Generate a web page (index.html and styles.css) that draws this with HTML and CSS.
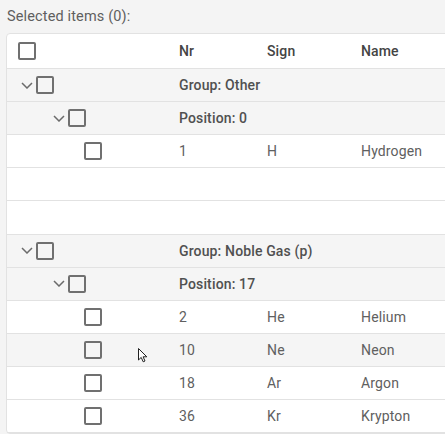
FILE: index.html
```html
<!DOCTYPE html>
<html lang="en">
<head>
<meta charset="utf-8">
<title>Selected items</title>
<link rel="stylesheet" href="styles.css">
</head>
<body>
<div class="page">
  <div class="selected">Selected items (0):</div>
  <div class="grid">
    <div class="row head">
      <div class="lead ind-h"><span class="cb"></span></div>
      <div class="c nr">Nr</div>
      <div class="c sign">Sign</div>
      <div class="c name">Name</div>
    </div>

    <div class="row grp">
      <div class="lead ind-0"><svg class="chev" viewBox="0 0 12 7" width="12" height="7"><polyline points="1,1 6,6 11,1"/></svg><span class="cb"></span></div>
      <div class="c label">Group: Other</div>
    </div>
    <div class="row grp">
      <div class="lead ind-1"><svg class="chev" viewBox="0 0 12 7" width="12" height="7"><polyline points="1,1 6,6 11,1"/></svg><span class="cb"></span></div>
      <div class="c label">Position: 0</div>
    </div>
    <div class="row">
      <div class="lead ind-2"><span class="cb"></span></div>
      <div class="c nr">1</div>
      <div class="c sign">H</div>
      <div class="c name">Hydrogen</div>
    </div>
    <div class="row"></div>
    <div class="row"></div>

    <div class="row grp">
      <div class="lead ind-0"><svg class="chev" viewBox="0 0 12 7" width="12" height="7"><polyline points="1,1 6,6 11,1"/></svg><span class="cb"></span></div>
      <div class="c label">Group: Noble Gas (p)</div>
    </div>
    <div class="row grp">
      <div class="lead ind-1"><svg class="chev" viewBox="0 0 12 7" width="12" height="7"><polyline points="1,1 6,6 11,1"/></svg><span class="cb"></span></div>
      <div class="c label">Position: 17</div>
    </div>
    <div class="row">
      <div class="lead ind-2"><span class="cb"></span></div>
      <div class="c nr">2</div>
      <div class="c sign">He</div>
      <div class="c name">Helium</div>
    </div>
    <div class="row hover">
      <div class="lead ind-2"><span class="cb"></span></div>
      <div class="c nr">10</div>
      <div class="c sign">Ne</div>
      <div class="c name">Neon</div>
      <svg class="cursor" viewBox="0 0 11 15" width="11" height="15"><path d="M0.5 0.5 V12 L3.2 9.4 L5.2 13.8 L7 13 L5.1 8.8 H8.8 Z"/></svg>
    </div>
    <div class="row">
      <div class="lead ind-2"><span class="cb"></span></div>
      <div class="c nr">18</div>
      <div class="c sign">Ar</div>
      <div class="c name">Argon</div>
    </div>
    <div class="row">
      <div class="lead ind-2"><span class="cb"></span></div>
      <div class="c nr">36</div>
      <div class="c sign">Kr</div>
      <div class="c name">Krypton</div>
    </div>
  </div>
</div>
</body>
</html>
```

FILE: styles.css
```css
html, body {
  margin: 0;
  padding: 0;
  background: #f4f4f4;
  overflow: hidden;
}

.page {
  width: 445px;
  height: 434px;
  padding-left: 6px;
  box-sizing: border-box;
  font-family: Roboto, "Liberation Sans", Arial, sans-serif;
  font-size: 14px;
  letter-spacing: 0.01em;
  overflow: hidden;
}

.selected {
  height: 33px;
  display: flex;
  align-items: center;
  padding-left: 1px;
  padding-bottom: 1px;
  box-sizing: border-box;
  color: #5f5f5f;
  font-size: 14.5px;
}

.grid {
  width: 520px;
  background: #ffffff;
  border: 1px solid #e2e2e2;
  border-radius: 4px 0 0 4px;
}

.row {
  position: relative;
  display: flex;
  align-items: center;
  height: 33.12px;
  box-sizing: border-box;
  border-bottom: 1px solid #e2e2e2;
}

.row.head {
  height: 35px;
}

.row.grp,
.row.hover {
  background: #f5f5f5;
}

.lead {
  width: 172px;
  flex: none;
  display: flex;
  align-items: center;
  box-sizing: border-box;
}

.ind-h { padding-left: 11px; }
.ind-0 { padding-left: 14px; }
.ind-1 { padding-left: 46px; }
.ind-2 { padding-left: 77px; }

.chev {
  display: block;
  margin-right: 3px;
  fill: none;
  stroke: #6b6b6b;
  stroke-width: 1.5;
}

.cb {
  display: block;
  width: 18px;
  height: 18px;
  box-sizing: border-box;
  border: 2px solid #707070;
  border-radius: 2px;
}

.c {
  flex: none;
  color: #606060;
  white-space: nowrap;
}

.nr { width: 88px; }
.sign { width: 94px; }
.name { width: 100px; }

.head .c {
  color: #444444;
  font-weight: 500;
}

.label {
  color: #505050;
  font-weight: 500;
}

.cursor {
  position: absolute;
  left: 131px;
  top: 14px;
  fill: #ffffff;
  stroke: #222222;
  stroke-width: 1;
  stroke-linejoin: round;
}
```
